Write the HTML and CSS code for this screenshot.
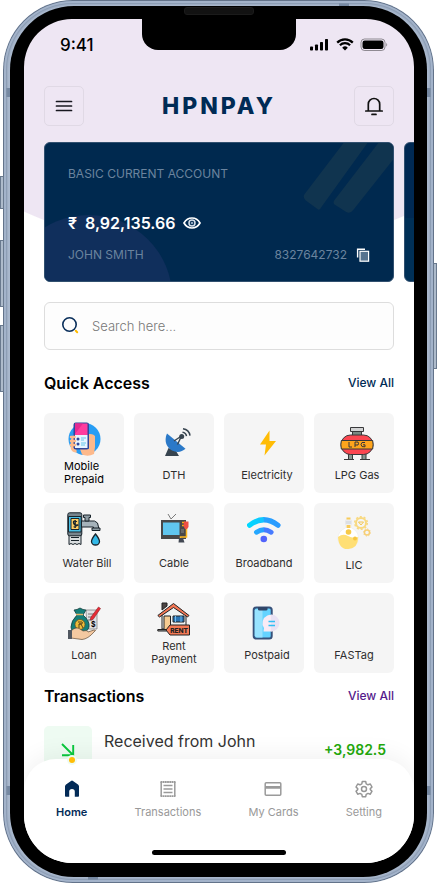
FILE: index.html
```html
<!DOCTYPE html>
<html lang="en">
<head>
<meta charset="utf-8">
<meta name="viewport" content="width=device-width, initial-scale=1">
<title>HPNPAY</title>
<link rel="stylesheet" href="styles.css">
</head>
<body>
<div class="phone">
  <span class="key key-mute"></span>
  <span class="key key-up"></span>
  <span class="key key-down"></span>
  <span class="key key-power"></span>
  <div class="bezel">
    <span class="speaker"></span>
    <div class="screen">
      <span class="notch"></span>
      <div class="status">
        <span class="time">9:41</span>
        <svg class="signals" viewBox="0 0 78 14" aria-hidden="true">
          <rect x="0" y="8.500" width="3" height="4" rx=".8"/><rect x="5" y="6.500" width="3" height="6" rx=".8"/><rect x="10" y="4" width="3" height="8.500" rx=".8"/><rect x="15" y="1" width="3" height="11.500" rx=".8"/>
          <path d="M27.200 4.600a11 11 0 0 1 15.600 0M29.900 7.200a7.200 7.200 0 0 1 10.200 0" fill="none" stroke="#000" stroke-width="2.200"/><path d="M32.200 9.700a4 4 0 0 1 5.600 0L35 12.600z"/>
          <rect x="51" y="1" width="24" height="11.500" rx="3.500" fill="none" stroke="#000" stroke-opacity=".4"/><rect x="52.500" y="2.500" width="21" height="8.500" rx="2.200"/><path d="M76.300 5v3.500c1.200-.4 1.200-3.100 0-3.500z" opacity=".45"/>
        </svg>
      </div>
      <header class="topbar">
        <button class="square" aria-label="Menu"><svg width="20" height="20" viewBox="0 0 20 20"><path d="M2.500 5.500h15M2.500 10h15M2.500 14.500h15" stroke="#17171f" stroke-width="1.700" stroke-linecap="round"/></svg></button>
        <h1 class="brand">HPNPAY</h1>
        <button class="square" aria-label="Notifications"><svg width="20" height="20" viewBox="0 0 20 20"><path d="M4.300 15V8.200a5.700 5.700 0 0 1 11.400 0V15M1.800 15h16.400M8 18.400h4" fill="none" stroke="#111" stroke-width="1.700" stroke-linecap="round"/></svg></button>
      </header>
      <main class="content">
        <div class="cards">
          <section class="card">
            <svg class="card-art" viewBox="0 0 350 140" preserveAspectRatio="none" aria-hidden="true">
              <circle cx="44" cy="157" r="84" fill="#102f5c"/>
              <path d="M301-1 261 52Q259 55 262 58L274 67Q276 69 278 65L325-1zM336-1 291 58Q289 61 292 63L303 70Q307 72 310 68L350 17V-1z" fill="#10344f"/>
            </svg>
            <p class="muted">BASIC CURRENT ACCOUNT</p>
            <p class="balance"><span>₹</span><span>8,92,135.66</span>
              <button class="plain" aria-label="Hide balance"><svg width="18" height="14" viewBox="0 0 18 14"><path d="M1 7c2-3.500 5-5 8-5s6 1.500 8 5c-2 3.500-5 5-8 5S3 10.500 1 7z" fill="#00294f" stroke="#fff" stroke-width="1.700"/><circle cx="9" cy="7" r="3" fill="none" stroke="#d7e0ea" stroke-width="1.500"/><circle cx="9" cy="7" r="1.300" fill="#8ba3bc"/></svg></button></p>
            <p class="owner"><span>JOHN SMITH</span><span class="account">8327642732
              <button class="plain" aria-label="Copy account number"><svg width="14" height="14" viewBox="0 0 14 14"><path d="M1.600 9.500V1.200H9" fill="none" stroke="#fff" stroke-width="1.400"/><rect x="4" y="3.300" width="8.600" height="9.900" fill="#56738f" stroke="#fff" stroke-width="1.200"/></svg></button></span></p>
          </section>
          <section class="card card-next" aria-label="Next account"></section>
        </div>
        <label class="search">
          <svg width="20" height="20" viewBox="0 0 20 20" aria-hidden="true"><circle cx="8.500" cy="8.500" r="6.700" fill="none" stroke="#0a2f5b" stroke-width="1.600"/><path d="m14.800 14.800 1.400 1.400" stroke="#fb0" stroke-width="2" stroke-linecap="round"/></svg>
          <input type="search" placeholder="Search here..." aria-label="Search">
        </label>
        <div class="heading"><h2>Quick Access</h2><a href="#quick">View All</a></div>
        <nav class="tiles" id="quick" aria-label="Quick Access">
          <a class="tile tile-double" href="#mobile">
            <svg viewBox="0 0 34 34"><circle cx="17.500" cy="17" r="16" fill="#279df4"/><path d="M21 12c3 0 5 0 7 2v11l-1 7q-6 3-12 .5L13 27h9z" fill="#fdb98b"/><path d="M7 13q-3 2-3.200 6v8q2 4 6 3.500z" fill="#fdb98b"/><rect x="6.500" y=".5" width="15.500" height="27" rx="2.200" fill="#31479b"/><path d="M8 1.500h12.500V13H8z" fill="#ff3c9e"/><path d="M8 1.500h8L8 12z" fill="#e52a91"/><path d="M8 13h12.500v13H8z" fill="#e9f5ff"/><circle cx="11" cy="17" r="1.500" fill="#31479b"/><circle cx="11" cy="22" r="1.500" fill="#31479b"/><path d="M14 16h5m-5 2h3m-3 3h5m-5 2h4" stroke="#69c8ec" stroke-width="1.200"/><path d="M4 15h3.500M4 19h4M4 23h4" stroke="#fdb98b" stroke-width="2.600" stroke-linecap="round"/></svg>
            <span class="label-dark">Mobile<br>Prepaid</span></a>
          <a class="tile" href="#dth">
            <svg viewBox="0 0 34 34"><path d="m11.500 22-3.500 8h14l-3-5z" fill="#37444f"/><path d="M10 7.500C6.500 15 10 22 15 24.500s10 1.500 13.500-1.800z" fill="#2b79c8"/><path d="m17 15 7.500-5m-4 8.500 4-8.500" stroke="#37444f" stroke-width="1.400"/><circle cx="24.700" cy="10.500" r="2.500" fill="#37444f"/><path d="M25.500 6.200q3.500.5 4 4M26 2.800q6 .8 7 6.800" fill="none" stroke="#37444f" stroke-width="1.500"/></svg>
            <span>DTH</span></a>
          <a class="tile tile-inset" href="#electricity">
            <svg viewBox="0 0 34 34"><path d="M19.500 4.500 10 18.500h6L14.500 29.500 26 15h-6.500z" fill="#ffbc05"/></svg>
            <span>Electricity</span></a>
          <a class="tile tile-inset" href="#gas">
            <svg viewBox="0 0 34 34" stroke="#38383a"><path d="M8.500 26h4v7.500h-4zM22 26h4v7.500h-4z" fill="#87978f"/><path d="M12.500 5h9v5h-9z" fill="#7a8982"/><path d="M10.500 1.500h13v4h-13z" fill="#d2d3d4"/><rect x="1" y="9" width="32" height="19.500" rx="9.500" fill="#fb4650"/><path d="M1.300 14.500h31.400q.8 4 0 8.500H1.300q-.8-4.500 0-8.500z" fill="#ffa51c"/><path d="M9 16v5h3M15 21v-5h3q1 1.500 0 3h-3M25 16.500q-4-1-4 2t4 2.300v-2h-2M4 33.500h10M20 33.500h10" fill="none"/></svg>
            <span>LPG Gas</span></a>
          <a class="tile tile-high" href="#water">
            <svg viewBox="0 0 34 34" stroke="#18232a"><path d="M2 21h12v11.500l-2-1-2 1-2-1-2 1-2-1-2 1z" fill="#d9dddf"/><path d="M4 25.500h8m-8 3h8"/><rect x=".8" y=".8" width="14" height="23" rx="1.800" fill="#77858d"/><path d="M1.500 4.500h12.600v15.500H1.500z" fill="#49bfe5"/><path d="M4 6.500h8v11H4z" fill="#ffcd63"/><path d="M10 9.500q-4-1.500-3.500 1.200T10 13t-3.500 2M8.200 8v8" fill="none" stroke-width="1.300"/><path d="M14.500 9h13q4 1 4 6v3h-5v-3h-12z" fill="#a5b2ba"/><path d="M16.500 3h7v2.500H22V9h-4V5.500h-1.500zM25 16h8v2.500h-8z" fill="#8d9ba2"/><path d="M28.500 22q-4 5-4 7.500a4 3.500 0 0 0 8 0q0-2.500-4-7.500z" fill="#33b9e8" stroke-width="1.300"/></svg>
            <span class="label-inset">Water Bill</span></a>
          <a class="tile tile-high" href="#cable">
            <svg viewBox="0 0 34 34"><path d="m11 2 3 5 5-5" fill="none" stroke="#7a7a7a"/><path d="M4 8h25v19H4z" fill="#484848"/><path d="M6 10.500h16.500v12.500H6z" fill="#60c6ee"/><path d="M25 10.500h3m-3 3h3" stroke="#ffae0c" stroke-width="1.500"/><path d="M29.500 16v9h-6v3" fill="none" stroke="#fcb822" stroke-width="1.500"/><path d="M27 9.500h4.500V15l-1.500 2h-2L26.500 14z" fill="#ee4e43"/><path d="M22 26h4l1.500 4.500h-6z" fill="#424853"/><path d="M24 18h3m-3 2h3" stroke="#888"/></svg>
            <span>Cable</span></a>
          <a class="tile tile-high" href="#broadband">
            <svg viewBox="0 0 34 34" fill="none" stroke-linecap="round"><defs><linearGradient id="wave" x1="0" x2="1"><stop stop-color="#00d7ff"/><stop offset=".48" stop-color="#12c4ff"/><stop offset=".52" stop-color="#26a2ff"/><stop offset="1" stop-color="#2a9aff"/></linearGradient><linearGradient id="wave2" x1="0" x2="1"><stop stop-color="#24a8ff"/><stop offset=".48" stop-color="#279eff"/><stop offset=".52" stop-color="#447bff"/><stop offset="1" stop-color="#477bff"/></linearGradient></defs><path d="M2.600 13.200Q16.800 2.300 31 13.200" stroke="url(#wave)" stroke-width="5.200"/><path d="M9.500 20.200q7.300-5 14.600 0" stroke="url(#wave2)" stroke-width="5"/><circle cx="16.800" cy="27" r="3.300" fill="#5163fb"/></svg>
            <span>Broadband</span></a>
          <a class="tile" href="#lic">
            <svg viewBox="0 0 34 34"><path d="M8.500 4h6v8q7 3 7 10.500a10.300 10.300 0 0 1-20.600 0Q1 15 8.500 12z" fill="#fff" stroke="#ececec" stroke-width=".7"/><path d="M1 21q5-4 10-1t10.200 1q0 11-9.700 12T1 21z" fill="#ffdf75"/><path d="M9.500 1.500h4v2h-4zM9.500 9h4v3h-4z" fill="#f7cb5a"/><path d="M8.500 4.500h6v4h-6z" fill="#dcdfe4"/><circle cx="11.500" cy="16" r="2.800" fill="#f7c947"/><circle cx="18" cy="22.500" r="2" fill="#f6c640"/><circle cx="24" cy="7" r="5" fill="none" stroke="#f8d980" stroke-width="2"/><circle cx="24" cy="7" r="6.300" fill="none" stroke="#f8d980" stroke-width="1.500" stroke-dasharray="2 1.960"/><path d="m21.500 6 2.500 3 2.500-3z" fill="none" stroke="#f3c853"/><circle cx="30" cy="16.500" r="2.500" fill="none" stroke="#f7cf77" stroke-width="1.400"/><circle cx="30" cy="16.500" r="3.500" fill="none" stroke="#f7cf77" stroke-dasharray="1.200 1.500"/></svg>
            <span>LIC</span></a>
          <a class="tile" href="#loan">
            <svg viewBox="0 0 34 34"><path d="M19 4h11v19H20z" fill="#e0e1e3" stroke="#777" stroke-width=".7"/><path d="M21 8h6m-6 3h5m-5 3h4" stroke="#777"/><text x="24" y="21" font-size="7" font-family="Inter" font-weight="700">$</text><path d="m23 14 1-3 7.500-10 2 1.500-7.500 11z" fill="#e82b35" stroke="#8c2129" stroke-width=".6"/><path d="m10 9-3-5 3-.5 3-1.500 3 1.500 3 .5-3 5q7 6 6 12-1 5-9 6-9 0-9-6t6-12z" fill="#147f79" stroke="#143d3c" stroke-width=".8"/><path d="M9 8.500h7" stroke="#e0b56a" stroke-width="1.500"/><circle cx="13" cy="18.500" r="5" fill="#eebc39" stroke="#614a22" stroke-width=".7"/><path d="M11 16h4q2 2-3 2h2l2 4m-4-4v4" fill="none" stroke="#59451d"/><path d="M4 25q5-5 9-2l3 2q5-1 5 1l6-2q3 0 0 2-6 7-12 7.500L4 32z" fill="#f4c9a1" stroke="#614a35" stroke-width=".7"/><path d="M1 24h4v9H1z" fill="#515760"/></svg>
            <span>Loan</span></a>
          <a class="tile tile-double" href="#rent">
            <svg viewBox="0 0 34 34" stroke="#222"><path d="M5 13 16.500 4 29 13v14H5z" fill="#eef1f2"/><path d="M5 1h5v3l-5 4z" fill="#4d4544"/><path d="M.8 13.500 16.500 1.500 32 13.500 30.500 15 16.500 5.500 2.500 15z" fill="#f67855"/><path d="M7 14h6.500v14H7z" fill="#f6cb91"/><path d="M16 14h11v6H16z" fill="#2873b5"/><path d="M18.500 14v6m5.500-6v6" stroke="#70bcec"/><path d="M.8 27.500h9v1.500h-9z" fill="#999"/><path d="m9 28 4-5h19.500v10H13z" fill="#f47955"/><text x="13.200" y="30.600" font-size="6.600" font-family="Inter" font-weight="800" fill="#222" stroke="none">RENT</text></svg>
            <span class="label-centered">Rent<br>Payment</span></a>
          <a class="tile tile-inset" href="#postpaid">
            <svg viewBox="0 0 34 34"><rect x="3.700" y="1.500" width="18" height="31" rx="2.500" fill="#64d3ff" stroke="#37517a" stroke-width="2"/><path d="M4.700 4 10 2.500h2.500v29h-6l-1.800-2z" fill="#98e3ff"/><path d="M8 1h9.500v2.500q0 1-1.500 1H9.500Q8 4.500 8 3.500z" fill="#304568"/><path d="M13.500 25.500 14 22a8.300 8.300 0 1 1 7 3.500z" fill="#f9ebf5"/><path d="M21 8.500a8.500 8.500 0 0 1 0 17z" fill="#e9e2f3"/><path d="M18.500 15.500H25m-6.500 4H25" stroke="#30bff4" stroke-width="1.500"/></svg>
            <span>Postpaid</span></a>
          <a class="tile" href="#fastag"><span>FASTag</span></a>
        </nav>
        <div class="heading heading-late"><h2>Transactions</h2><a class="seen" href="#transactions">View All</a></div>
        <div class="entry" id="transactions">
          <span class="entry-icon"><svg width="16" height="16" viewBox="0 0 16 16"><path d="m2 2 11 11M13.200 3v10.200H2" fill="none" stroke="#09c83d" stroke-width="1.900"/></svg></span>
          <span class="entry-name">Received from John</span>
          <span class="amount">+3,982.5</span>
        </div>
      </main>
      <nav class="tabs" aria-label="Main">
        <a class="tab tab-active" href="#home"><svg viewBox="0 0 20 20"><path d="M3 7.500q0-1 1-2L9 2q1-.8 2 0l5 3.500q1 1 1 2V17q0 .8-.8.800h-3.400V12.500Q12.800 10 10 10t-2.800 2.500v5.300H3.800Q3 17.800 3 17z" fill="#032b57"/></svg>Home</a>
        <a class="tab" href="#history"><svg viewBox="0 0 20 20" fill="none" stroke="#9a9a9a" stroke-width="1.500"><path d="M3.200 3v14M16.800 3v14M5.500 6.500h9M5.500 10h9M5.500 13.500h9"/><path d="M2.500 3h15M2.500 17.200h15" stroke-width="1.800" stroke-dasharray="1.800 .4"/></svg>Transactions</a>
        <a class="tab" href="#cards"><svg viewBox="0 0 20 20" fill="none" stroke="#9a9a9a" stroke-width="1.500"><rect x="2.200" y="3.800" width="15.600" height="12.400" rx="1"/><path d="M2 8.300h16" stroke-width="2.800"/></svg>My Cards</a>
        <a class="tab" href="#setting"><svg viewBox="0 0 20 20" fill="none" stroke="#969696" stroke-width="1.500" stroke-linejoin="round"><path d="m8.300 2.500-.5 2.300-1.800 1-2.300-.8L2 8l1.700 1.600v1L2 12.200l1.700 3 2.300-.8 1.800 1 .5 2.300h3.400l.5-2.300 1.800-1 2.300.8 1.700-3-1.700-1.600v-1L18 8l-1.700-3-2.300.8-1.800-1-.5-2.300z"/><circle cx="10" cy="10.100" r="2.500"/></svg>Setting</a>
        <span class="home-bar"></span>
      </nav>
    </div>
  </div>
</div>
</body>
</html>
```
FILE: styles.css
```css
* { box-sizing: border-box; }
body, h1, h2, p { margin: 0; }
body { background: #fff; font-family: Inter, "Liberation Sans", sans-serif; color: #000; }
button { font: inherit; cursor: pointer; }
a { color: inherit; text-decoration: none; }
svg { display: block; flex: none; }

.phone {
  position: relative;
  height: 100vh;
  min-height: 640px;
  margin: 0 3px;
  padding: 6px 7px;
  border-radius: 70px;
  background:
    linear-gradient(#7487a1, #7487a1) 0 88px / 100% 9px no-repeat,
    linear-gradient(#7487a1, #7487a1) 0 calc(100% - 88px) / 100% 9px no-repeat,
    linear-gradient(#7487a1, #7487a1) 336px 0 / 10px 6px no-repeat,
    linear-gradient(#7487a1, #7487a1) 85px 100% / 10px 6px no-repeat,
    #a9b8cd;
  box-shadow: inset 0 0 0 1px #63738a, inset 0 0 0 3px #a3b3ca, inset 0 0 2px 4px #8495ad;
}
.key { position: absolute; width: 4px; border: 1px solid #69798e; background: #aebbcb; }
.key-mute { left: -3px; top: 176px; height: 33px; }
.key-up { left: -3px; top: 240px; height: 67px; }
.key-down { left: -3px; top: 325px; height: 67px; }
.key-power { right: -3px; top: 263px; height: 106px; }
.bezel { position: relative; height: 100%; padding: 13px 13px 14px 14px; border-radius: 64px; background: #000; }
.speaker { position: absolute; top: 1px; left: 50%; width: 70px; height: 8px; margin-left: -35px; border: 1px solid #1b1b1b; border-radius: 3px; background: #121212; }
.screen {
  position: relative;
  height: 100%;
  overflow: hidden;
  border-radius: 48px;
  background: radial-gradient(circle at 50% -240px, #eee6f3 474px, #fff 475px);
}
.notch { position: absolute; top: 0; left: 50%; width: 154px; height: 31px; margin-left: -77px; border-radius: 0 0 16px 16px; background: #000; }

.status { display: flex; justify-content: space-between; align-items: center; padding: 16px 26px 0 36px; }
.time { font-size: 17px; line-height: 20px; font-weight: 500; }
.signals { width: 78px; height: 14px; }
.topbar { display: flex; justify-content: space-between; align-items: center; padding: 31px 20px 16px; }
.square { display: grid; place-items: center; width: 40px; height: 40px; padding: 0; border: 1px solid #e0d9e5; border-radius: 5px; background: transparent; }
.brand { color: #002b55; font-size: 23px; line-height: 28px; font-weight: 800; letter-spacing: 3px; }

.content { padding: 0 20px; }
.cards { display: flex; gap: 10px; }
.card { position: relative; flex: 0 0 100%; min-width: 0; height: 140px; padding: 23px; overflow: hidden; border: 1px solid #31506f; border-radius: 6px; background: #00294f; color: #fff; }
.card-art { position: absolute; inset: 0; width: 100%; height: 100%; }
.card p { position: relative; }
.card-next { background: linear-gradient(#002953 54%, #003057 54%); }
.muted, .owner { color: #6b849e; font-size: 12px; line-height: 16px; }
.balance { display: flex; align-items: center; gap: 8px; margin-top: 31px; font-size: 16px; line-height: 20px; font-weight: 600; }
.owner { display: flex; justify-content: space-between; margin-top: 14px; }
.account { display: flex; align-items: center; gap: 9px; }
.plain { padding: 0; border: 0; background: none; }

.search { display: flex; align-items: center; gap: 11px; height: 48px; margin-top: 20px; padding: 0 16px; border: 1px solid #ddd; border-radius: 6px; background: #fdfdfd; }
.search input { flex: 1; min-width: 0; padding: 0; border: 0; outline: 0; background: none; font: 300 13px/18px Inter, "Liberation Sans", sans-serif; }
.search input::placeholder { color: #777; }

.heading { display: flex; justify-content: space-between; align-items: center; margin-top: 22px; }
.heading h2 { font-size: 16px; line-height: 22px; font-weight: 600; }
.heading a { color: #002b55; font-size: 12px; line-height: 16px; font-weight: 500; }
.heading .seen { color: #551a8b; }
.heading-late { margin-top: 12px; }
.tiles { display: grid; grid-template-columns: repeat(4, 1fr); gap: 10px; margin-top: 19px; }
.tile { display: flex; flex-direction: column; justify-content: flex-end; align-items: center; gap: 9px; height: 80px; padding-bottom: 11px; border-radius: 6px; background: #f5f5f5; color: #2e2e2e; font-size: 11px; line-height: 13px; }
.tile svg { width: 34px; height: 34px; }
.tile-double { gap: 4px; padding-bottom: 7px; }
.tile-high { gap: 11px; padding-bottom: 13px; }
.tile-inset { padding-left: 6px; }
.label-inset { padding-left: 6px; }
.label-dark { color: #000; }
.label-centered { text-align: center; }

.entry { display: flex; align-items: center; gap: 12px; margin-top: 19px; padding-right: 8px; }
.entry-icon { display: grid; place-items: center; width: 48px; height: 48px; border-radius: 5px; background: #eefbf2; }
.entry-name { flex: 1; align-self: flex-start; padding-top: 5px; color: #333; font-size: 16px; line-height: 20px; }
.amount { color: #23a90b; font-size: 14px; line-height: 16px; font-weight: 600; }

.tabs { position: absolute; bottom: 0; left: 0; right: 0; display: flex; justify-content: space-between; align-items: flex-start; height: 104px; padding: 20px 32px 0; border-radius: 32px 32px 0 0; background: #fff; box-shadow: 0 -4px 24px rgba(0, 0, 0, .06); }
.tab { display: flex; flex-direction: column; align-items: center; gap: 5px; color: #999; font-size: 11px; line-height: 16px; }
.tab svg { width: 20px; height: 20px; }
.tab-active { position: relative; color: #032b57; font-weight: 600; }
.tab-active::before { content: ""; position: absolute; top: -22px; left: 50%; width: 6px; height: 6px; margin-left: -3px; border-radius: 50%; background: #ffbd07; box-shadow: 0 0 0 2px #eefbf2; }
.home-bar { position: absolute; bottom: 8px; left: 50%; width: 134px; height: 5px; margin-left: -67px; border-radius: 3px; background: #000; }
```
